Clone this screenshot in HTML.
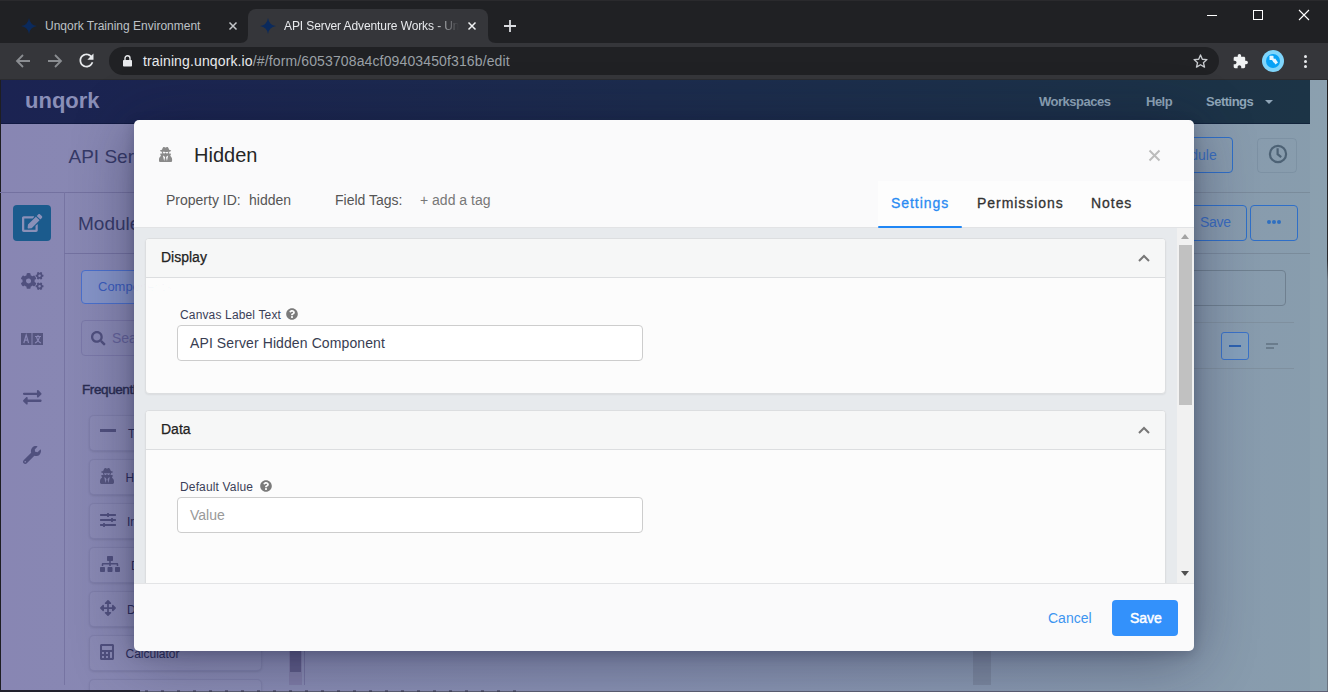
<!DOCTYPE html>
<html><head><meta charset="utf-8">
<style>
*{box-sizing:border-box;margin:0;padding:0}
html,body{width:1328px;height:692px;overflow:hidden;background:#202124;font-family:"Liberation Sans",sans-serif}
.a{position:absolute}
.t{position:absolute;white-space:nowrap;line-height:1}
svg{position:absolute;overflow:visible}
/* chrome */
#tabs{position:absolute;left:0;top:0;width:1328px;height:43px;background:#202124}
#toolbar{position:absolute;left:0;top:43px;width:1328px;height:37px;background:#35363a;border-bottom:1px solid #2b2c2f}
#omni{position:absolute;left:109px;top:47px;width:1110px;height:28px;border-radius:14px;background:#202124}
/* app */
#app{position:absolute;left:0;top:80px;width:1328px;height:612px;overflow:hidden;background:linear-gradient(90deg,#8886b3 0%,#8790b1 45%,#889dad 100%)}
#hdr{position:absolute;left:0;top:0;width:1310px;height:44px;border-bottom:1px solid rgba(0,10,40,.35);background:linear-gradient(90deg,#1b2352 0%,#1c2c4d 50%,#1c3446 100%)}
.card{position:absolute;left:89px;width:173px;height:36px;border-radius:5px;border:1px solid rgba(70,70,120,.16);background:rgba(255,255,255,.025);box-shadow:0 1px 2px rgba(30,30,60,.12)}
.ctext{position:absolute;left:35px;top:12px;font-size:12px;color:#2a2c5a;white-space:nowrap;line-height:1}
/* modal */
#modal{position:absolute;left:134px;top:120px;width:1060px;height:531px;background:#fafafb;border-radius:5px;box-shadow:0 3px 12px rgba(20,22,50,.22),0 8px 60px rgba(20,20,50,.42);overflow:hidden}
#content{position:absolute;left:0;top:108px;width:1060px;height:356px;background:#e7eaed;border-bottom:1px solid #e3e4e6;overflow:hidden}
.panel{position:absolute;left:11px;width:1021px;background:#fcfcfc;border:1px solid #dcdee0;border-radius:4px;overflow:hidden;box-shadow:0 1px 2px rgba(0,0,0,.06)}
.ph{position:absolute;left:0;top:0;width:100%;height:39px;background:#f6f7f7;border-bottom:1px solid #dcdee0}
.ptitle{position:absolute;left:15px;top:11px;font-size:14px;color:#222;-webkit-text-stroke:.25px currentColor;line-height:1;white-space:nowrap}
.lbl{position:absolute;font-size:12px;letter-spacing:.15px;color:#3b3f58;line-height:1;white-space:nowrap}
.inp{position:absolute;width:466px;height:36px;background:#fff;border:1px solid #cdcdcd;border-radius:4px}
.tab{position:absolute;top:76px;font-size:14px;letter-spacing:.95px;line-height:1;white-space:nowrap;color:#333;-webkit-text-stroke:.3px currentColor}
</style></head>
<body>
<!-- ============ TAB STRIP ============ -->
<div id="tabs">
  <div class="a" style="left:0;top:0;width:1328px;height:1px;background:#2a2a2d"></div>
  <!-- active tab -->
  <div class="a" style="left:248px;top:9px;width:240px;height:35px;background:#35363a;border-radius:8px 8px 0 0"></div>
  <svg style="left:240px;top:35px" width="8" height="8"><path d="M0 8 Q8 8 8 0 L8 8 Z" fill="#35363a"/></svg>
  <svg style="left:488px;top:35px" width="8" height="8"><path d="M8 8 Q0 8 0 0 L0 8 Z" fill="#35363a"/></svg>
  <!-- favicon tab1 -->
  <svg style="left:21px;top:18px" width="16" height="16" viewBox="0 0 16 16"><path d="M8 0 Q9 7 16 8 Q9 9 8 16 Q7 9 0 8 Q7 7 8 0Z" fill="#0b2a5c"/></svg>
  <div class="t" style="left:45px;top:20px;font-size:12px;color:#bdc1c6">Unqork Training Environment</div>
  <svg style="left:229px;top:22px" width="8" height="8"><path d="M0.5 0.5 L7.5 7.5 M7.5 0.5 L0.5 7.5" stroke="#c4c7ca" stroke-width="1.5"/></svg>
  <!-- favicon tab2 -->
  <svg style="left:260px;top:18px" width="16" height="16" viewBox="0 0 16 16"><path d="M8 0 Q9 7 16 8 Q9 9 8 16 Q7 9 0 8 Q7 7 8 0Z" fill="#0b2a5c"/></svg>
  <div class="t" style="left:284px;top:20px;font-size:12px;letter-spacing:-.1px;color:#e8eaed;width:175px;overflow:hidden;-webkit-mask-image:linear-gradient(90deg,#000 86%,transparent 100%)">API Server Adventure Works - Unqork</div>
  <svg style="left:468px;top:22px" width="8" height="8"><path d="M0.5 0.5 L7.5 7.5 M7.5 0.5 L0.5 7.5" stroke="#f1f3f4" stroke-width="1.5"/></svg>
  <!-- new tab -->
  <svg style="left:504px;top:20px" width="12" height="12"><path d="M6 0 V12 M0 6 H12" stroke="#dadce0" stroke-width="1.8"/></svg>
  <!-- window controls -->
  <div class="a" style="left:1207px;top:15px;width:10px;height:1px;background:#fff"></div>
  <div class="a" style="left:1253px;top:10px;width:10px;height:10px;border:1px solid #fff"></div>
  <svg style="left:1299px;top:10px" width="10" height="10"><path d="M0 0 L10 10 M10 0 L0 10" stroke="#fff" stroke-width="1.1"/></svg>
</div>
<!-- ============ TOOLBAR ============ -->
<div id="toolbar">
  <svg style="left:15px;top:10px" width="16" height="16" viewBox="0 0 16 16"><path d="M15 8 H2 M8 2 L2 8 L8 14" stroke="#8a8d91" stroke-width="1.8" fill="none"/></svg>
  <svg style="left:47px;top:10px" width="16" height="16" viewBox="0 0 16 16"><path d="M1 8 H14 M8 2 L14 8 L8 14" stroke="#8a8d91" stroke-width="1.8" fill="none"/></svg>
  <svg style="left:76px;top:7px" width="21" height="21" viewBox="0 0 24 24"><path d="M17.65 6.35C16.2 4.9 14.21 4 12 4c-4.42 0-7.99 3.58-7.99 8s3.57 8 7.99 8c3.73 0 6.84-2.55 7.73-6h-2.08c-.82 2.33-3.04 4-5.65 4-3.31 0-6-2.69-6-6s2.69-6 6-6c1.66 0 3.14.69 4.22 1.78L13 11h7V4l-2.35 2.35z" fill="#e8eaed"/></svg>
</div>
<div id="omni">
  <svg style="left:14px;top:8px" width="9" height="12" viewBox="0 0 9 12"><path d="M2 5 V3.3 A2.5 2.5 0 0 1 7 3.3 V5" stroke="#e8eaed" stroke-width="1.4" fill="none"/><rect x="0" y="5" width="9" height="6.5" rx="0.8" fill="#e8eaed"/></svg>
  <div class="t" style="left:34px;top:7px;font-size:14px;letter-spacing:.13px;color:#e8eaed">training.unqork.io<span style="color:#9aa0a6">/#/form/6053708a4cf09403450f316b/edit</span></div>
  <svg style="left:1084px;top:7px" width="15" height="14" viewBox="0 0 24 23"><path d="M12 1.5 L15 8.6 L22.6 9.2 L16.8 14.2 L18.6 21.6 L12 17.6 L5.4 21.6 L7.2 14.2 L1.4 9.2 L9 8.6 Z" stroke="#c8cbcf" stroke-width="2.2" fill="none" stroke-linejoin="round"/></svg>
</div>
<svg style="left:1233.3px;top:53.7px" width="14.9" height="14.9" viewBox="1 1 22 22"><path d="M20.5 11H19V7c0-1.1-.9-2-2-2h-4V3.5C13 2.12 11.88 1 10.5 1S8 2.12 8 3.5V5H4c-1.1 0-1.99.9-1.99 2v3.8H3.5c1.490 0 2.7 1.21 2.7 2.7s-1.21 2.7-2.7 2.7H2V20c0 1.1.9 2 2 2h3.8v-1.5c0-1.49 1.21-2.7 2.7-2.7 1.49 0 2.7 1.21 2.7 2.7V22H17c1.1 0 2-.9 2-2v-4h1.5c1.38 0 2.5-1.12 2.5-2.5S21.88 11 20.5 11z" fill="#f1f3f4"/></svg>
<div class="a" style="left:1262px;top:50px;width:22px;height:22px;border-radius:50%;background:#7fd5fb"></div>
<div class="a" style="left:1266px;top:54px;width:14px;height:14px;border-radius:50%;background:#08a2f6"></div>
<svg style="left:1268px;top:55px" width="11" height="11" viewBox="0 0 11 11"><rect x="1.5" y="0.8" width="4" height="4.2" rx="0.6" fill="#e6f6ff"/><path d="M4.6 5.2 L7.2 3.6 L10 7.6 L7.4 9.4 Z" fill="#e6f6ff"/><path d="M3.6 4.2 L6 3.2 L8.4 6.6 L5.6 7.6 Z" fill="#e6f6ff"/></svg>
<div class="a" style="left:1304px;top:55px;width:3px;height:3px;border-radius:50%;background:#e8eaed"></div>
<div class="a" style="left:1304px;top:60px;width:3px;height:3px;border-radius:50%;background:#e8eaed"></div>
<div class="a" style="left:1304px;top:65px;width:3px;height:3px;border-radius:50%;background:#e8eaed"></div>

<!-- ============ APP ============ -->
<div id="app">
  <div id="hdr">
    <div class="t" style="left:25px;top:10px;font-size:22px;font-weight:700;color:#8a8fb8">unqork</div>
    <div class="t" style="left:1039px;top:15px;font-size:13px;font-weight:700;letter-spacing:-.5px;color:#8fa5b8">Workspaces</div>
    <div class="t" style="left:1146px;top:15px;font-size:13px;font-weight:700;letter-spacing:-.5px;color:#8fa5b8">Help</div>
    <div class="t" style="left:1206px;top:15px;font-size:13px;font-weight:700;letter-spacing:-.5px;color:#8fa5b8">Settings</div>
    <svg style="left:1265px;top:20px" width="8" height="4"><path d="M0 0 H8 L4 4Z" fill="#8fa5b8"/></svg>
  </div>
  <!-- page scrollbar column -->
  <div class="a" style="left:1310px;top:0;width:17px;height:612px;background:rgba(255,255,255,.03)"></div>
  <div class="a" style="left:1327px;top:0;width:1px;height:612px;background:linear-gradient(#1e1c1e 0,#2a2a2e 180px,#6a7480 200px,#6a7480 100%)"></div>
  <div class="a" style="left:0;top:0;width:1px;height:612px;background:#1e1e22"></div>

  <!-- title row -->
  <div class="t" style="left:68.5px;top:66.5px;font-size:19px;color:#363a68">API Server Adventure Works</div>
  <div class="a" style="left:0;top:112px;width:1310px;height:1px;background:linear-gradient(90deg,#7371a0,#75789f 50%,#7a8c9b)"></div>
  <!-- left icon rail -->
  <div class="a" style="left:64px;top:112px;width:1px;height:493px;background:#7674a2"></div>
  <div class="a" style="left:13px;top:125px;width:38px;height:36px;border-radius:4px;background:#1b5b8d"></div>
  <svg style="left:22px;top:134px" width="20.25" height="18" viewBox="0 0 576 512"><path d="M402.6 83.2l90.2 90.2c3.8 3.8 3.8 10 0 13.8L274.4 405.6l-92.8 10.3c-12.4 1.4-22.9-9.1-21.5-21.5l10.3-92.8L388.8 83.2c3.8-3.8 10-3.8 13.8 0zm162-22.9l-48.8-48.8c-15.2-15.2-39.9-15.2-55.2 0l-35.4 35.4c-3.8 3.8-3.8 10 0 13.8l90.2 90.2c3.8 3.8 10 3.8 13.8 0l35.4-35.4c15.200-15.3 15.2-40 0-55.2zM384 346.2V448H64V128h229.8c3.2 0 6.2-1.3 8.5-3.5l40-40c7.6-7.6 2.2-20.5-8.5-20.5H48C21.5 64 0 85.5 0 112v352c0 26.5 21.5 48 48 48h352c26.5 0 48-21.5 48-48V306.2c0-10.7-12.9-16-20.5-8.5l-40 40c-2.2 2.3-3.5 5.3-3.5 8.5z" fill="#8a90b8"/></svg>
  <!-- gears -->
  <svg style="left:21px;top:192px" width="22.5" height="18" viewBox="0 0 640 512"><path d="M512.1 191l-8.2 14.3c-3 5.3-9.4 7.5-15.1 5.4-11.8-4.4-22.6-10.7-32.1-18.6-4.6-3.8-5.8-10.5-2.8-15.7l8.2-14.3c-6.9-8-12.3-17.3-15.9-27.4h-16.5c-6 0-11.2-4.3-12.2-10.3-2-12-2.1-24.6 0-37.1 1-6 6.2-10.4 12.2-10.4h16.5c3.6-10.1 9-19.4 15.9-27.4l-8.2-14.3c-3-5.2-1.9-11.9 2.8-15.7 9.5-7.9 20.4-14.2 32.1-18.6 5.7-2.1 12.1.1 15.1 5.4l8.2 14.3c10.5-1.9 21.2-1.9 31.7 0L552 6.3c3-5.3 9.4-7.5 15.1-5.4 11.8 4.4 22.6 10.7 32.1 18.6 4.6 3.8 5.8 10.5 2.8 15.7l-8.2 14.3c6.9 8 12.3 17.3 15.9 27.4h16.5c6 0 11.2 4.3 12.2 10.3 2 12 2.1 24.6 0 37.1-1 6-6.2 10.4-12.2 10.4h-16.5c-3.6 10.1-9 19.4-15.9 27.4l8.2 14.3c3 5.2 1.9 11.9-2.8 15.7-9.5 7.9-20.4 14.2-32.1 18.6-5.7 2.1-12.1-.1-15.1-5.4l-8.2-14.3c-10.4 1.9-21.2 1.9-31.7 0zm-10.5-58.8c38.5 29.6 82.4-14.3 52.8-52.8-38.5-29.7-82.4 14.3-52.8 52.8zM386.3 286.1l33.7 16.8c10.1 5.8 14.5 18.1 10.5 29.1-8.9 24.2-26.4 46.4-42.6 65.8-7.4 8.9-20.2 11.1-30.3 5.3l-29.1-16.8c-16 13.7-34.6 24.6-54.9 31.7v33.6c0 11.6-8.3 21.6-19.7 23.6-24.6 4.2-50.4 4.4-75.9 0-11.5-2-20-11.9-20-23.6V418c-20.3-7.2-38.9-18-54.9-31.7L74 403c-10 5.8-22.9 3.6-30.3-5.3-16.2-19.4-33.3-41.6-42.2-65.7-4-10.9.4-23.2 10.5-29.1l33.3-16.8c-3.9-20.9-3.9-42.4 0-63.4L12 205.8c-10.1-5.8-14.6-18.1-10.5-29 8.9-24.2 26-46.4 42.2-65.8 7.4-8.9 20.2-11.1 30.3-5.3l29.1 16.8c16-13.7 34.6-24.6 54.9-31.7V57.1c0-11.5 8.2-21.5 19.6-23.5 24.6-4.2 50.5-4.4 76-.1 11.5 2 20 11.9 20 23.6v33.6c20.3 7.2 38.9 18 54.9 31.7l29.1-16.8c10-5.8 22.9-3.6 30.3 5.3 16.2 19.4 33.2 41.6 42.1 65.8 4 10.9.1 23.2-10 29.1l-33.7 16.8c3.9 21 3.9 42.5 0 63.5zm-117.6 21.1c59.2-77-28.7-164.9-105.7-105.7-59.2 77 28.7 164.9 105.7 105.7zm243.4 182.7l-8.2 14.3c-3 5.3-9.4 7.5-15.1 5.4-11.8-4.4-22.6-10.7-32.1-18.6-4.6-3.8-5.8-10.5-2.8-15.7l8.2-14.3c-6.9-8-12.3-17.3-15.9-27.4h-16.5c-6 0-11.2-4.3-12.2-10.3-2-12-2.1-24.6 0-37.1 1-6 6.2-10.4 12.2-10.4h16.5c3.6-10.1 9-19.4 15.9-27.4l-8.2-14.3c-3-5.2-1.9-11.9 2.8-15.7 9.5-7.9 20.4-14.2 32.1-18.6 5.7-2.1 12.1.1 15.1 5.4l8.2 14.3c10.5-1.9 21.2-1.9 31.7 0l8.2-14.3c3-5.3 9.4-7.5 15.1-5.4 11.8 4.4 22.6 10.7 32.1 18.6 4.6 3.8 5.8 10.5 2.8 15.7l-8.2 14.3c6.9 8 12.3 17.3 15.9 27.4h16.5c6 0 11.2 4.3 12.2 10.3 2 12 2.1 24.6 0 37.1-1 6-6.2 10.4-12.2 10.4h-16.5c-3.6 10.1-9 19.4-15.9 27.4l8.2 14.3c3 5.2 1.9 11.9-2.8 15.7-9.5 7.9-20.4 14.2-32.1 18.6-5.7 2.1-12.1-.1-15.1-5.4l-8.2-14.3c-10.4 1.9-21.2 1.9-31.7 0zM501.6 431c38.5 29.6 82.4-14.3 52.8-52.8-38.5-29.6-82.4 14.3-52.8 52.8z" fill="#50507e"/></svg>
  <!-- translate -->
  <svg style="left:21px;top:253px" width="22" height="12" viewBox="0 0 22 12"><rect x="0" y="0" width="10.5" height="12" fill="#55557f"/><rect x="11.5" y="0" width="10.5" height="12" fill="#55557f"/><path d="M2.8 10 L5.2 2 L7.6 10 M3.8 7.2 H6.6" stroke="#8886b4" stroke-width="1.2" fill="none"/><path d="M14 3.5 H20 M17 2 V4 M15.5 4 Q17 9 20 10 M18.5 4 Q17 9 14 10" stroke="#8886b4" stroke-width="1.1" fill="none"/></svg>
  <!-- arrows -->
  <svg style="left:22.7px;top:307.6px" width="18.6" height="18.6" viewBox="0 0 512 512"><path d="M0 168v-16c0-13.255 10.745-24 24-24h360V80c0-21.367 25.899-32.042 40.971-16.971l80 80c9.372 9.373 9.372 24.569 0 33.941l-80 80C409.956 271.982 384 261.456 384 240v-48H24c-13.255 0-24-10.745-24-24zm488 152H128v-48c0-21.314-25.862-32.080-40.971-16.971l-80 80c-9.372 9.373-9.372 24.569 0 33.941l80 80C102.057 463.997 128 453.437 128 432v-48h360c13.255 0 24-10.745 24-24v-16c0-13.255-10.745-24-24-24z" fill="#50507e"/></svg>
  <!-- wrench -->
  <svg style="left:23px;top:366px" width="18" height="18" viewBox="0 0 512 512"><path d="M507.73 109.1c-2.24-9.03-13.54-12.09-20.12-5.51l-74.36 74.36-67.88-11.31-11.31-67.88 74.36-74.36c6.62-6.62 3.43-17.9-5.66-20.16-47.38-11.74-99.55.91-136.58 37.93-39.64 39.64-50.55 97.1-34.05 147.2L18.74 402.76c-24.99 24.99-24.99 65.51 0 90.5 24.99 24.99 65.51 24.99 90.5 0l213.21-213.21c50.12 16.71 107.47 5.68 147.37-34.22 37.07-37.07 49.7-89.32 37.91-136.73zM64 472c-13.25 0-24-10.75-24-24 0-13.26 10.75-24 24-24s24 10.74 24 24c0 13.25-10.75 24-24 24z" fill="#50507e"/></svg>

  <!-- module editor header -->
  <div class="t" style="left:78px;top:134px;font-size:19px;color:#363a68">Module Editor</div>
  <div class="a" style="left:64px;top:173px;width:1246px;height:1px;background:linear-gradient(90deg,#7371a0,#75789f 50%,#7a8c9b)"></div>
  <!-- components btn -->
  <div class="a" style="left:81px;top:190px;width:120px;height:34px;border-radius:4px;border:1px solid #4a70cc;background:#8594c7"></div>
  <div class="t" style="left:98px;top:200px;font-size:13px;color:#3a5cbd">Components</div>
  <!-- search -->
  <div class="a" style="left:81px;top:240px;width:210px;height:36px;border-radius:4px;border:1px solid #7a78a8"></div>
  <svg style="left:90.5px;top:251px" width="14.5" height="14.5" viewBox="0 0 512 512"><path d="M505 442.7L405.3 343c-4.5-4.5-10.6-7-17-7H372c27.6-35.3 44-79.7 44-128C416 93.1 322.9 0 208 0S0 93.1 0 208s93.1 208 208 208c48.3 0 92.7-16.4 128-44v16.3c0 6.4 2.5 12.5 7 17l99.7 99.7c9.4 9.4 24.6 9.4 33.9 0l28.3-28.3c9.4-9.4 9.4-24.6.1-34zM208 336c-70.700 0-128-57.200-128-128 0-70.700 57.200-128 128-128 70.700 0 128 57.200 128 128 0 70.700-57.200 128-128 128z" fill="#50507e"/></svg>
  <div class="t" style="left:112px;top:251px;font-size:14px;color:#64639a">Search</div>
  <div class="t" style="left:82px;top:302.5px;font-size:13.5px;letter-spacing:-.4px;-webkit-text-stroke:.45px #2a2d52;color:#2a2d52">Frequently Used</div>

  <!-- cards -->
  <div class="card" style="top:335px"><div class="ctext" style="left:38px">Text</div></div>
  <div class="card" style="top:379px"><div class="ctext" style="left:35.5px">Hidden</div></div>
  <div class="card" style="top:423px"><div class="ctext" style="left:37px">Initializer</div></div>
  <div class="card" style="top:467px"><div class="ctext" style="left:41px">Decision</div></div>
  <div class="card" style="top:511px"><div class="ctext" style="left:37px">Data Workflow</div></div>
  <div class="card" style="top:555px"><div class="ctext" style="left:35.5px">Calculator</div></div>
  <div class="card" style="top:599px"></div>
  <!-- card icons -->
  <div class="a" style="left:100px;top:349px;width:16px;height:3px;background:#50507e"></div>
  <svg style="left:100px;top:388px" width="14" height="16" viewBox="0 0 448 512"><path d="M383.9 308.3l23.9-62.6c4-10.5-3.7-21.7-15-21.7h-58.5c11-18.9 17.8-40.6 17.8-64v-.3c39.2-7.8 64-19.1 64-31.7 0-13.3-27.3-25.1-70.1-33-9.2-32.8-27-65.8-40.6-82.8-9.500-11.9-25.9-15.6-39.5-8.8l-27.6 13.8c-9 4.5-19.6 4.5-28.6 0L182.1 3.4c-13.6-6.8-30-3.1-39.5 8.8-13.5 17-31.4 50-40.6 82.8-42.7 7.9-70 19.7-70 33 0 12.6 24.8 23.9 64 31.7v.3c0 23.4 6.8 45.1 17.8 64H56.3c-11.5 0-19.2 11.7-14.7 22.3l25.8 60.2C27.3 329.8 0 372.7 0 422.4v44.8C0 491.9 20.1 512 44.8 512h358.4c24.7 0 44.8-20.1 44.8-44.8v-44.8c0-48.4-25.8-90.4-64.1-114.1zM176 480l-41.6-192 49.6 32 24 40-32 120zm96 0l-32-120 24-40 49.6-32L272 480zm41.7-298.5c-3.9 11.9-7 24.6-16.5 33.4-10.1 9.3-48 22.4-64-25-2.8-8.4-15.4-8.4-18.3 0-17 50.2-56 32.4-64 25-9.5-8.8-12.7-21.5-16.5-33.4-.8-2.5-6.3-5.7-6.3-5.8v-10.8c28.3 3.6 61 5.8 96 5.8s67.7-2.100 96-5.8v10.8c-.1.1-5.6 3.2-6.4 5.8z" fill="#55557f"/></svg>
  <svg style="left:100px;top:431.5px" width="16" height="16" viewBox="0 0 512 512"><path d="M496 384H160v-16c0-8.8-7.2-16-16-16h-32c-8.8 0-16 7.2-16 16v16H16c-8.8 0-16 7.2-16 16v32c0 8.8 7.2 16 16 16h80v16c0 8.8 7.2 16 16 16h32c8.8 0 16-7.2 16-16v-16h336c8.8 0 16-7.2 16-16v-32c0-8.8-7.2-16-16-16zm0-160h-80v-16c0-8.8-7.2-16-16-16h-32c-8.8 0-16 7.2-16 16v16H16c-8.8 0-16 7.2-16 16v32c0 8.8 7.2 16 16 16h336v16c0 8.8 7.2 16 16 16h32c8.8 0 16-7.2 16-16v-16h80c8.8 0 16-7.2 16-16v-32c0-8.8-7.2-16-16-16zm0-160H288V48c0-8.8-7.2-16-16-16h-32c-8.8 0-16 7.2-16 16v16H16C7.2 64 0 71.2 0 80v32c0 8.8 7.2 16 16 16h208v16c0 8.8 7.2 16 16 16h32c8.8 0 16-7.2 16-16v-16h208c8.8 0 16-7.2 16-16V80c0-8.8-7.2-16-16-16z" fill="#50507e"/></svg>
  <svg style="left:100px;top:476px" width="20" height="16" viewBox="0 0 640 512"><path d="M128 352H32c-17.67 0-32 14.33-32 32v96c0 17.67 14.33 32 32 32h96c17.67 0 32-14.33 32-32v-96c0-17.67-14.33-32-32-32zm-24-80h192v48h48v-48h192v48h48v-57.59c0-21.17-17.230-38.410-38.410-38.410H344v-64h40c17.67 0 32-14.33 32-32V32c0-17.67-14.33-32-32-32H256c-17.67 0-32 14.33-32 32v96c0 17.67 14.33 32 32 32h40v64H94.41C73.23 224 56 241.23 56 262.41V320h48v-48zm264 80h-96c-17.67 0-32 14.33-32 32v96c0 17.67 14.33 32 32 32h96c17.67 0 32-14.33 32-32v-96c0-17.67-14.33-32-32-32zm240 0h-96c-17.67 0-32 14.33-32 32v96c0 17.67 14.33 32 32 32h96c17.67 0 32-14.33 32-32v-96c0-17.67-14.33-32-32-32z" fill="#50507e"/></svg>
  <svg style="left:100px;top:520px" width="16" height="16" viewBox="0 0 512 512"><path d="M352.201 425.775l-79.196 79.196c-9.373 9.373-24.568 9.373-33.941 0l-79.196-79.196c-15.119-15.119-4.411-40.971 16.971-40.970h51.162L228 284H127.196v51.162c0 21.382-25.851 32.090-40.971 16.971L7.029 272.937c-9.373-9.373-9.373-24.569 0-33.941L86.225 159.800c15.119-15.119 40.971-4.411 40.971 16.971V228H228V127.196h-51.230c-21.382 0-32.090-25.851-16.971-40.971l79.196-79.196c9.373-9.373 24.568-9.373 33.941 0l79.196 79.196c15.119 15.119 4.411 40.971-16.971 40.971h-51.162V228h100.804v-51.162c0-21.382 25.851-32.090 40.970-16.971l79.196 79.196c9.373 9.373 9.373 24.569 0 33.941L425.773 352.200c-15.119 15.119-40.971 4.411-40.970-16.971V284H284v100.804h51.230c21.382 0 32.090 25.851 16.971 40.971z" fill="#50507e"/></svg>
  <svg style="left:100px;top:564px" width="14" height="16" viewBox="0 0 448 512"><path d="M400 0H48C22.4 0 0 22.4 0 48v416c0 25.6 22.4 48 48 48h352c25.6 0 48-22.4 48-48V48c0-25.600-22.400-48-48-48zM128 435.2c0 6.4-6.4 12.8-12.8 12.8H76.8c-6.4 0-12.8-6.4-12.8-12.8v-38.4c0-6.4 6.4-12.8 12.8-12.8h38.4c6.4 0 12.8 6.4 12.8 12.8v38.4zm0-128c0 6.4-6.4 12.8-12.8 12.8H76.8c-6.4 0-12.8-6.4-12.8-12.8v-38.4c0-6.4 6.4-12.8 12.8-12.8h38.4c6.4 0 12.8 6.4 12.8 12.8v38.4zm128 128c0 6.4-6.4 12.8-12.8 12.8h-38.4c-6.4 0-12.8-6.4-12.8-12.8v-38.4c0-6.4 6.4-12.8 12.8-12.8h38.4c6.4 0 12.8 6.4 12.8 12.8v38.4zm0-128c0 6.4-6.4 12.8-12.8 12.8h-38.4c-6.4 0-12.8-6.4-12.8-12.8v-38.4c0-6.4 6.4-12.8 12.8-12.8h38.4c6.4 0 12.8 6.4 12.8 12.8v38.4zm128 128c0 6.4-6.4 12.8-12.8 12.8h-38.4c-6.4 0-12.8-6.4-12.8-12.8V268.8c0-6.4 6.4-12.8 12.8-12.8h38.4c6.4 0 12.8 6.4 12.8 12.8v166.4zm0-256c0 6.4-6.4 12.8-12.8 12.8H76.8c-6.4 0-12.8-6.4-12.8-12.8V76.8C64 70.4 70.4 64 76.8 64h294.4c6.4 0 12.8 6.4 12.8 12.8v102.4z" fill="#50507e"/></svg>
  <!-- sidebar scrollbar -->
  <div class="a" style="left:289px;top:320px;width:13px;height:285px;background:#7e7ca6"></div>
  <div class="a" style="left:290px;top:480px;width:11px;height:112px;background:#5e5c88"></div>
  <div class="a" style="left:304px;top:173px;width:1px;height:432px;background:#7474a0"></div>
  <div class="a" style="left:973px;top:571px;width:18px;height:34px;background:rgba(100,110,130,.35)"></div>

  <!-- right side toolbar -->
  <div class="a" style="left:1150px;top:57px;width:83px;height:36px;border-radius:4px;border:1px solid #2f6fc8"></div>
  <div class="t" style="left:1121px;top:68px;font-size:14px;color:#3a6fc0">Publish Module</div>
  <div class="a" style="left:1257px;top:58px;width:40px;height:35px;border-radius:4px;border:1px solid rgba(80,100,120,.18)"></div>
  <svg style="left:1267.6px;top:63.5px" width="20" height="20" viewBox="0 0 20 20"><circle cx="10" cy="10" r="8.1" stroke="#4d6275" stroke-width="2.2" fill="none"/><path d="M9.6 4.3 V10.2 L13.2 13.2" stroke="#4d6275" stroke-width="2.2" fill="none"/></svg>
  <div class="a" style="left:1150px;top:125px;width:97px;height:36px;border-radius:4px;border:1px solid #2f6fc8"></div>
  <div class="t" style="left:1200px;top:135px;font-size:14px;letter-spacing:-.3px;color:#3a6cc0">Save</div>
  <div class="a" style="left:1250px;top:125px;width:48px;height:36px;border-radius:4px;border:1px solid #2f6fc8"></div>
  <div class="a" style="left:1267px;top:139.5px;width:4px;height:4px;border-radius:50%;background:#2f6fc0"></div>
  <div class="a" style="left:1272px;top:139.5px;width:4px;height:4px;border-radius:50%;background:#2f6fc0"></div>
  <div class="a" style="left:1277px;top:139.5px;width:4px;height:4px;border-radius:50%;background:#2f6fc0"></div>
  <div class="a" style="left:1150px;top:190px;width:136px;height:36px;border-radius:4px;border:1px solid #6f8090"></div>
  <div class="a" style="left:1150px;top:242px;width:144px;height:1px;background:#7f909f"></div>
  <div class="a" style="left:1221px;top:252px;width:28px;height:28px;border-radius:3px;border:1px solid #3a72c8;background:#85a0bb"></div>
  <div class="a" style="left:1229px;top:265px;width:12px;height:2px;background:#2d62b0"></div>
  <div class="a" style="left:1266px;top:263px;width:12px;height:2px;background:#6a7c8c"></div>
  <div class="a" style="left:1266px;top:267px;width:8px;height:2px;background:#6a7c8c"></div>
  <div class="a" style="left:1150px;top:288px;width:144px;height:1px;background:#7f909f"></div>

  <!-- bottom strip -->
  <div class="a" style="left:0;top:611px;width:1328px;height:1px;background:#5c5f74"></div>
  <div class="a" style="left:145px;top:610px;width:375px;height:2px;background:repeating-linear-gradient(90deg,rgba(30,30,50,.4) 0 3px,transparent 3px 16px)"></div>
  <div class="a" style="left:0;top:610px;width:140px;height:2px;background:#22222c"></div>
</div>

<!-- ============ MODAL ============ -->
<div id="modal">
  <svg style="left:25px;top:27px" width="13.1" height="15" viewBox="0 0 448 512"><path d="M383.9 308.3l23.9-62.6c4-10.5-3.7-21.7-15-21.7h-58.5c11-18.9 17.8-40.6 17.8-64v-.3c39.2-7.8 64-19.1 64-31.7 0-13.3-27.3-25.1-70.1-33-9.2-32.8-27-65.8-40.6-82.8-9.500-11.9-25.9-15.6-39.5-8.8l-27.6 13.8c-9 4.5-19.6 4.5-28.6 0L182.1 3.4c-13.6-6.8-30-3.1-39.5 8.8-13.5 17-31.4 50-40.6 82.8-42.7 7.9-70 19.7-70 33 0 12.6 24.8 23.9 64 31.7v.3c0 23.4 6.8 45.1 17.8 64H56.3c-11.5 0-19.2 11.7-14.7 22.3l25.8 60.2C27.3 329.8 0 372.7 0 422.4v44.8C0 491.9 20.1 512 44.8 512h358.4c24.7 0 44.8-20.1 44.8-44.8v-44.8c0-48.4-25.8-90.4-64.1-114.1zM176 480l-41.6-192 49.6 32 24 40-32 120zm96 0l-32-120 24-40 49.6-32L272 480zm41.7-298.5c-3.9 11.9-7 24.6-16.5 33.4-10.1 9.3-48 22.4-64-25-2.8-8.4-15.4-8.4-18.3 0-17 50.2-56 32.4-64 25-9.5-8.8-12.7-21.5-16.5-33.4-.8-2.5-6.3-5.7-6.3-5.8v-10.8c28.3 3.6 61 5.8 96 5.8s67.7-2.100 96-5.8v10.8c-.1.1-5.6 3.2-6.4 5.8z" fill="#8a8a8a"/></svg>
  <div class="t" style="left:60px;top:25px;font-size:20px;color:#262626">Hidden</div>
  <svg style="left:1015px;top:30px" width="11" height="11"><path d="M0.5 0.5 L10.5 10.5 M10.5 0.5 L0.5 10.5" stroke="#bcbcbc" stroke-width="2"/></svg>
  <div class="t" style="left:32px;top:73px;font-size:14px;color:#555">Property ID:</div>
  <div class="t" style="left:115px;top:73px;font-size:14px;color:#555">hidden</div>
  <div class="t" style="left:201px;top:73px;font-size:14px;color:#555">Field Tags:</div>
  <div class="t" style="left:286px;top:73px;font-size:14px;color:#777">+ add a tag</div>
  <!-- tabs -->
  <div class="a" style="left:744px;top:61px;width:316px;height:47px;background:#fdfdfd"></div>
  <div class="tab" style="left:757px;color:#2a8bf2">Settings</div>
  <div class="tab" style="left:843px">Permissions</div>
  <div class="tab" style="left:957px">Notes</div>
  <div class="a" style="left:0;top:107px;width:1060px;height:1px;background:#e2e3e5"></div>
  <div class="a" style="left:744px;top:106px;width:84px;height:2px;border-radius:1px;background:#1f86f5"></div>

  <div id="content">
    <div class="panel" style="top:10px;height:156px">
      <div class="ph"><div class="ptitle">Display</div>
        <svg style="left:992px;top:15px" width="12" height="8"><path d="M1 7 L6 2 L11 7" stroke="#777" stroke-width="2" fill="none"/></svg>
      </div>
      <div class="lbl" style="left:34px;top:70px">Canvas Label Text</div>
      <svg style="left:140px;top:69px" width="12" height="12" viewBox="0 0 512 512"><path d="M504 256c0 136.997-111.043 248-248 248S8 392.997 8 256C8 119.083 119.043 8 256 8s248 111.083 248 248zM262.655 90c-54.497 0-89.255 22.957-116.549 63.758-3.536 5.286-2.353 12.415 2.715 16.258l34.699 26.310c5.205 3.947 12.621 3.008 16.665-2.122 17.864-22.658 30.113-35.797 57.303-35.797 20.429 0 45.698 13.148 45.698 32.958 0 14.976-12.363 22.667-32.534 33.976C247.128 238.528 216 254.941 216 296v4c0 6.627 5.373 12 12 12h56c6.627 0 12-5.373 12-12v-1.333c0-28.462 83.186-29.647 83.186-106.667 0-58.002-60.165-102-116.531-102zM256 338c-25.365 0-46 20.635-46 46 0 25.364 20.635 46 46 46s46-20.636 46-46c0-25.365-20.635-46-46-46z" fill="#7b7b7b"/></svg>
      <div class="inp" style="left:31px;top:86px"><div class="t" style="left:12px;top:10px;font-size:14px;letter-spacing:.1px;color:#383d52">API Server Hidden Component</div></div>
    </div>
    <div class="panel" style="top:182px;height:200px">
      <div class="ph"><div class="ptitle">Data</div>
        <svg style="left:992px;top:15px" width="12" height="8"><path d="M1 7 L6 2 L11 7" stroke="#777" stroke-width="2" fill="none"/></svg>
      </div>
      <div class="lbl" style="left:34px;top:70px">Default Value</div>
      <svg style="left:114px;top:69px" width="12" height="12" viewBox="0 0 512 512"><path d="M504 256c0 136.997-111.043 248-248 248S8 392.997 8 256C8 119.083 119.043 8 256 8s248 111.083 248 248zM262.655 90c-54.497 0-89.255 22.957-116.549 63.758-3.536 5.286-2.353 12.415 2.715 16.258l34.699 26.310c5.205 3.947 12.621 3.008 16.665-2.122 17.864-22.658 30.113-35.797 57.303-35.797 20.429 0 45.698 13.148 45.698 32.958 0 14.976-12.363 22.667-32.534 33.976C247.128 238.528 216 254.941 216 296v4c0 6.627 5.373 12 12 12h56c6.627 0 12-5.373 12-12v-1.333c0-28.462 83.186-29.647 83.186-106.667 0-58.002-60.165-102-116.531-102zM256 338c-25.365 0-46 20.635-46 46 0 25.364 20.635 46 46 46s46-20.636 46-46c0-25.365-20.635-46-46-46z" fill="#7b7b7b"/></svg>
      <div class="inp" style="left:31px;top:86px"><div class="t" style="left:12px;top:10px;font-size:14px;color:#999">Value</div></div>
    </div>
    <!-- scrollbar -->
    <div class="a" style="left:1043px;top:0;width:17px;height:356px;background:#f1f1f1"></div>
    <div class="a" style="left:1045px;top:17px;width:13px;height:160px;background:#c1c1c1"></div>
    <svg style="left:1047px;top:6px" width="8" height="5"><path d="M0 5 L4 0 L8 5Z" fill="#a3a3a3"/></svg>
    <svg style="left:1047px;top:343px" width="8" height="5"><path d="M0 0 L8 0 L4 5Z" fill="#505050"/></svg>
  </div>
  <!-- see-through ghosts -->
  <div class="a" style="left:-134px;top:-120px;width:1328px;height:692px;color:rgba(54,58,104,.025);pointer-events:none">
    <div class="t" style="left:68.5px;top:146.5px;font-size:19px">API Server Adventure Works - Module</div>
    <div class="t" style="left:78px;top:214px;font-size:19px">Module Editor</div>
    <div class="t" style="left:82px;top:382.5px;font-size:13.5px;letter-spacing:-.4px;-webkit-text-stroke:.3px rgba(54,58,104,.025)">Frequently Used</div>
    <div class="t" style="left:128px;top:428px;font-size:12px">Text</div>
    <div class="t" style="left:125.5px;top:472px;font-size:12px">Hidden</div>
    <div class="t" style="left:127px;top:516px;font-size:12px">Initializer</div>
    <div class="t" style="left:131px;top:560px;font-size:12px">Decision</div>
    <div class="t" style="left:127px;top:604px;font-size:12px">Data Workflow</div>
    <div class="t" style="left:98px;top:280px;font-size:13px;color:rgba(58,92,189,.03)">Components</div>
    <div class="t" style="left:112px;top:331px;font-size:14px">Search</div>
    <div class="t" style="left:560px;top:310px;font-size:14px">Drop a module</div>
  </div>
  <!-- footer -->
  <div class="t" style="left:914px;top:491px;font-size:14px;color:#3d95f0">Cancel</div>
  <div class="a" style="left:978px;top:480px;width:66px;height:36px;border-radius:4px;background:#3391fb"></div>
  <div class="t" style="left:996px;top:491px;font-size:14px;color:#fff;-webkit-text-stroke:.45px #fff">Save</div>
</div>
</body></html>
